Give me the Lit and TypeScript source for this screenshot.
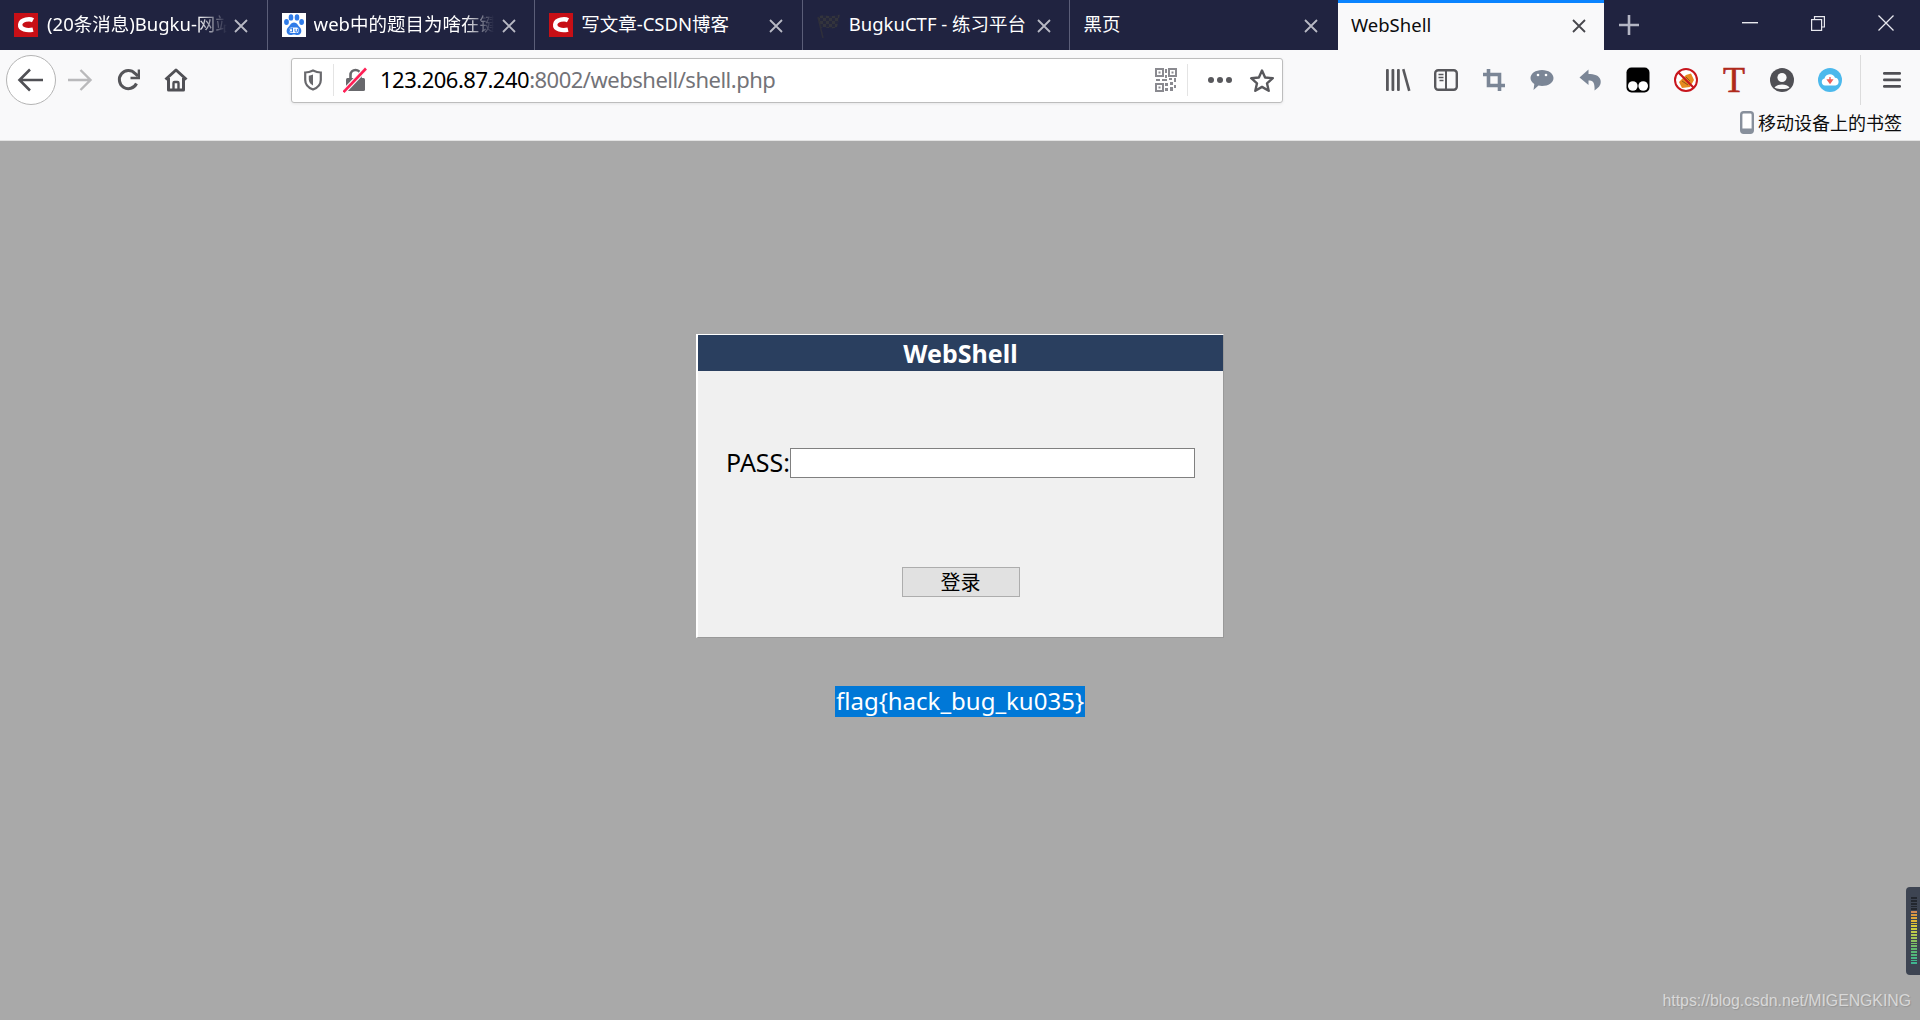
import { LitElement, html, css } from 'lit';
import { customElement } from 'lit/decorators.js';

const csdnIcon = html`<svg width="24" height="24" viewBox="0 0 24 24">
  <rect width="24" height="24" fill="#c70f16"></rect>
  <path d="M19 7.2 C16 5.6 7 6 6.2 11.5 C5.6 16.5 13 18 19 16.6" fill="none" stroke="#fff" stroke-width="4.4"></path>
</svg>`;

const baiduIcon = html`<svg width="24" height="24" viewBox="0 0 24 24">
  <rect width="24" height="24" fill="#fff"></rect>
  <g fill="#2f7be8">
    <ellipse cx="4.5" cy="9" rx="2.4" ry="3"></ellipse>
    <ellipse cx="9" cy="4.4" rx="2.3" ry="3.2"></ellipse>
    <ellipse cx="15" cy="4.4" rx="2.3" ry="3.2"></ellipse>
    <ellipse cx="19.6" cy="9" rx="2.4" ry="3"></ellipse>
    <path d="M12 9.5c3 0 4 3 6 5 2.4 2.6 1.6 7.5-2.5 7.5-1.5 0-2.3-.6-3.5-.6s-2 .6-3.5.6C4.4 22 3.6 17 6 14.5c2-2 3-5 6-5z"></path>
  </g>
  <rect x="7.5" y="14.5" width="9" height="5.5" rx="1.5" fill="#fff"></rect>
  <path d="M10.5 14.8v4.4M10.5 17.2a1.5 1.7 0 1 0 0 .1M13 15.8v2.2a1.2 1.2 0 0 0 2.4 0v-2.2" fill="none" stroke="#2f7be8" stroke-width="1"></path>
</svg>`;

const flagIcon = html`<svg width="24" height="26" viewBox="0 0 24 26">
  <defs>
    <pattern id="chk" width="6" height="6" patternUnits="userSpaceOnUse">
      <rect width="6" height="6" fill="#25273c"></rect>
      <rect width="3" height="3" fill="#33343c"></rect>
      <rect x="3" y="3" width="3" height="3" fill="#33343c"></rect>
    </pattern>
  </defs>
  <path d="M1 5 C7 1 12 7 23 2 L20 15 C12 19 8 13 4 16 Z" fill="url(#chk)"></path>
  <path d="M1 5 L6 26" stroke="#2e2f3a" stroke-width="1.5"></path>
</svg>`;

const closeIcon = html`<svg width="16" height="16" viewBox="0 0 16 16">
  <path d="M2 2 L14 14 M14 2 L2 14" stroke="currentColor" stroke-width="1.8" fill="none"></path>
</svg>`;

const backIcon = html`<svg width="28" height="28" viewBox="0 0 28 28" fill="none" stroke="#505055" stroke-width="2.6">
  <path d="M26 14 H3 M13 3.5 L2.5 14 L13 24.5"></path>
</svg>`;

const forwardIcon = html`<svg width="26" height="26" viewBox="0 0 26 26" fill="none" stroke="#b9b9bb" stroke-width="2.4">
  <path d="M1 13 H23 M13.5 3 L23.5 13 L13.5 23"></path>
</svg>`;

const reloadIcon = html`<svg width="24" height="24" viewBox="-1 0 24 24" fill="none" stroke="#555559" stroke-width="3">
  <path d="M19.5 15.5 A9 9 0 1 1 18 5.5 L21 8"></path>
  <path d="M22 1.5 V10 H13.5" stroke-width="2.6"></path>
</svg>`;

const homeIcon = html`<svg width="24" height="24" viewBox="0 0 24 24" fill="none" stroke="#505055" stroke-width="3" stroke-linejoin="round">
  <path d="M1.5 11.5 L12 2 L22.5 11.5"></path>
  <path d="M4.5 10 V22 H19.5 V10"></path>
  <path d="M9.5 22 V15 A1 1 0 0 1 10.5 14 H13.5 A1 1 0 0 1 14.5 15 V22" stroke-width="2.4"></path>
</svg>`;

const shieldIcon = html`<svg width="18" height="22" viewBox="0 0 18 22">
  <path d="M9 1.5 C12 3 14.5 3.5 16.8 3.5 V11 C16.8 15.5 13 19 9 20.5 C5 19 1.2 15.5 1.2 11 V3.5 C3.5 3.5 6 3 9 1.5 Z" fill="none" stroke="#68686c" stroke-width="2.2"></path>
  <path d="M9 5.5 V16.5 C6.5 15 4.8 13 4.8 10.5 V6.8 C6.2 6.7 7.6 6.2 9 5.5 Z" fill="#68686c"></path>
</svg>`;

const lockIcon = html`<svg width="24" height="26" viewBox="0 0 24 26">
  <path d="M7.5 12 V8 A5 5 0 0 1 17.5 8 V12" fill="none" stroke="#68686c" stroke-width="2.6"></path>
  <rect x="3" y="11" width="19" height="13" rx="1.5" fill="#68686c"></rect>
  <path d="M0.5 25 L23 1.5" stroke="#f9f9fa" stroke-width="5"></path>
  <path d="M0.5 25 L23 1.5" stroke="#ff1f55" stroke-width="2.6"></path>
</svg>`;

const qrIcon = html`<svg width="22" height="24" viewBox="0 0 22 24">
  <g fill="none" stroke="#8a8a90" stroke-width="2">
    <rect x="1" y="1" width="7" height="7"></rect>
    <rect x="14" y="1" width="7" height="7"></rect>
    <rect x="1" y="16" width="7" height="7"></rect>
  </g>
  <g fill="#8a8a90">
    <rect x="3.5" y="3.5" width="2" height="2"></rect>
    <rect x="16.5" y="3.5" width="2" height="2"></rect>
    <rect x="3.5" y="18.5" width="2" height="2"></rect>
    <rect x="10" y="1" width="2" height="4"></rect>
    <rect x="10" y="7" width="2" height="3"></rect>
    <rect x="1" y="11" width="4" height="2"></rect>
    <rect x="7" y="11" width="5" height="2"></rect>
    <rect x="14" y="10" width="3" height="2"></rect>
    <rect x="19" y="10" width="2" height="4"></rect>
    <rect x="10" y="15" width="3" height="3"></rect>
    <rect x="15" y="14" width="3" height="3"></rect>
    <rect x="19" y="17" width="2" height="3"></rect>
    <rect x="10" y="20" width="3" height="3"></rect>
    <rect x="15" y="19" width="3" height="4"></rect>
  </g>
</svg>`;

const dotsIcon = html`<svg width="26" height="8" viewBox="0 0 26 8" fill="#58585c">
  <circle cx="4" cy="4" r="3"></circle>
  <circle cx="13" cy="4" r="3"></circle>
  <circle cx="22" cy="4" r="3"></circle>
</svg>`;

const starIcon = html`<svg width="26" height="25" viewBox="0 0 26 25">
  <path d="M13 2.5 L16.1 9.5 L23.8 10.2 L18 15.3 L19.7 22.8 L13 18.9 L6.3 22.8 L8 15.3 L2.2 10.2 L9.9 9.5 Z" fill="none" stroke="#58585c" stroke-width="2.4" stroke-linejoin="round"></path>
</svg>`;

const libraryIcon = html`<svg width="26" height="24" viewBox="0 0 26 24" fill="#58585c">
  <rect x="1" y="1" width="2.8" height="22" rx="1"></rect>
  <rect x="6.5" y="1" width="2.8" height="22" rx="1"></rect>
  <rect x="12" y="1" width="2.8" height="22" rx="1"></rect>
  <path d="M17 1.5 L19.5 .8 L25.5 22.5 L23 23.2 Z"></path>
</svg>`;

const sidebarIcon = html`<svg width="24" height="22" viewBox="0 0 24 22">
  <rect x="1.2" y="1.2" width="21.6" height="19.6" rx="3" fill="none" stroke="#58585c" stroke-width="2.4"></rect>
  <path d="M12 1 V21" stroke="#58585c" stroke-width="2"></path>
  <path d="M4.5 5.5 H9.5 M4.5 8.5 H9.5 M5.5 11.5 H9.5" stroke="#58585c" stroke-width="1.5"></path>
</svg>`;

const cropIcon = html`<svg width="22" height="22" viewBox="0 0 22 22" fill="none" stroke="#7b8696" stroke-width="3.6">
  <path d="M5.5 0 V16.5 H22"></path>
  <path d="M0 5.5 H16.5 V22"></path>
</svg>`;

const chatIcon = html`<svg width="24" height="22" viewBox="0 0 24 22">
  <path d="M12 1 C18.5 1 23.5 4.6 23.5 9 C23.5 13.5 18.5 17 12 17 C10.8 17 9.5 16.9 8.5 16.6 L3.5 21 L4.3 15 C2 13.5 .5 11.4 .5 9 C.5 4.6 5.5 1 12 1 Z" fill="#7b8696"></path>
  <circle cx="8" cy="6" r="1.3" fill="#fff"></circle>
  <circle cx="16" cy="6" r="1.3" fill="#fff"></circle>
</svg>`;

const undoIcon = html`<svg width="22" height="22" viewBox="0 0 22 22">
  <path d="M9.5 0.5 L0.5 8.5 L9.5 16 V11.5 C14 11.5 16 13.5 15.5 21.5 C20 18.5 22.5 16 21.5 11 C20.5 6.5 15 5 9.5 5 Z" fill="#7b8696"></path>
</svg>`;

const tamperIcon = html`<svg width="24" height="26" viewBox="0 0 24 26">
  <rect x="0.5" y="0.5" width="23" height="25" rx="5" fill="#000"></rect>
  <circle cx="6.8" cy="19" r="4.8" fill="#fff"></circle>
  <circle cx="17.2" cy="19" r="4.8" fill="#fff"></circle>
</svg>`;

const noAdIcon = html`<svg width="24" height="24" viewBox="0 0 24 24">
  <circle cx="12" cy="12" r="11" fill="#fff" stroke="#c8161d" stroke-width="2"></circle>
  <path d="M5 14 L12 7 L17 5.5 L20 12 L16 19 L8 20 Z" fill="#e78a1f"></path>
  <path d="M8 13 L14 17 M12 9 L16 13" stroke="#8c5a1c" stroke-width="1"></path>
  <path d="M4.5 4.5 L19.5 19.5" stroke="#c8161d" stroke-width="2.2"></path>
</svg>`;

const accountIcon = html`<svg width="24" height="24" viewBox="0 0 24 24">
  <circle cx="12" cy="12" r="12" fill="#505055"></circle>
  <circle cx="12" cy="9.5" r="4.6" fill="#f9f9fa"></circle>
  <path d="M4.5 19.5 C7 15.5 17 15.5 19.5 19.5 C17 21.5 7 21.5 4.5 19.5 Z" fill="#f9f9fa"></path>
</svg>`;

const cloudIcon = html`<svg width="24" height="24" viewBox="0 0 24 24">
  <circle cx="12" cy="12" r="12" fill="#4cb9ec"></circle>
  <path d="M7 17.5 A3.5 3.5 0 0 1 6.5 10.6 A5.5 5.5 0 0 1 17 9.8 A3.9 3.9 0 0 1 17.5 17.5 Z" fill="#fff"></path>
  <path d="M12 9 V13 M9.8 12 L12 15 L14.2 12 Z" stroke="#f0605a" stroke-width="1.4" fill="#f0605a"></path>
</svg>`;

const menuIcon = html`<svg width="20" height="18" viewBox="0 0 20 18" fill="#505055">
  <rect x="1" y="1" width="18" height="2.8" rx="1.2"></rect>
  <rect x="1" y="7.5" width="18" height="2.8" rx="1.2"></rect>
  <rect x="1" y="14" width="18" height="2.8" rx="1.2"></rect>
</svg>`;

const phoneIcon = html`<svg width="14" height="23" viewBox="0 0 14 23">
  <rect x="1.2" y="1.2" width="11.6" height="20.6" rx="2.5" fill="#fff" stroke="#88909c" stroke-width="2.4"></rect>
  <rect x="1.2" y="17.5" width="11.6" height="4.3" rx="1" fill="#88909c"></rect>
</svg>`;

const tabs = [
  { icon: csdnIcon, title: '(20条消息)Bugku-网站' },
  { icon: baiduIcon, title: 'web中的题目为啥在键' },
  { icon: csdnIcon, title: '写文章-CSDN博客' },
  { icon: flagIcon, title: 'BugkuCTF - 练习平台' },
  { icon: null, title: '黑页' },
];

const toolbarIcons = [
  libraryIcon, sidebarIcon, cropIcon, chatIcon, undoIcon, tamperIcon, noAdIcon,
];

// level meter colours, top to bottom
const meterTicks = [
  '#23272f', '#23272f', '#23272f', '#23272f', '#23272f',
  '#d38a52', '#dc9a3f', '#dfa83a', '#e0b535', '#dfc033', '#d8c838', '#cbcb42', '#bfcb48',
  '#b0c950', '#a3c657', '#8cc25f', '#7fc065', '#76bd68', '#62b96f', '#58b775', '#52b67a', '#48b585', '#42b58b', '#3fb490',
];

@customElement('app-root')
export class AppRoot extends LitElement {
  static styles = css`
    :host {
      display: flex;
      flex-direction: column;
      position: relative;
      height: 100vh;
      overflow: hidden;
      font-family: "Noto Sans", "Noto Sans CJK SC", sans-serif;
      background: #a9a9a9;
    }

    .tabstrip {
      display: flex;
      flex: 0 0 50px;
      background: #202340;
      color: #fff;
    }

    .tab {
      flex: 0 0 267.6px;
      box-sizing: border-box;
      display: flex;
      align-items: center;
      padding-left: 14px;
      border-right: 1px solid #5b5e78;
      position: relative;
    }

    .tab.last {
      border-right: none;
    }

    .tab.active {
      flex: 0 0 266px;
      background: #f9f9fa;
      color: #0c0c0d;
      border-top: 3px solid #0a84ff;
      border-right: none;
    }

    .favicon {
      flex: 0 0 24px;
      height: 26px;
      margin-right: 8px;
      display: flex;
      align-items: center;
    }

    .title {
      width: 200px;
      flex: 0 0 auto;
      overflow: hidden;
      white-space: nowrap;
      font-size: 18.5px;
      line-height: 24px;
      margin-top: -2px;
      mask-image: linear-gradient(to right, #000 150px, transparent 180px);
      -webkit-mask-image: linear-gradient(to right, #000 150px, transparent 180px);
    }

    .tab:first-child .title {
      margin-left: 1px;
    }

    .tab.plain .title,
    .tab.active .title {
      width: 211px;
      mask-image: none;
      -webkit-mask-image: none;
    }

    .tab.plain .title {
      margin-left: -1px;
    }

    .tab.active .title {
      margin-top: -4px;
      margin-left: -1px;
    }

    .title.full {
      mask-image: none;
      -webkit-mask-image: none;
    }

    .close {
      position: absolute;
      left: 233px;
      top: 18px;
      display: flex;
      color: #b8b9c4;
    }

    .tab.active .close {
      color: #47474c;
      top: 15px;
    }

    .new-tab {
      flex: 0 0 50px;
      display: flex;
      align-items: center;
      justify-content: center;
    }

    .window-controls {
      margin-left: auto;
      display: flex;
      height: 46px;
      align-items: center;
    }

    .win {
      width: 68px;
      display: flex;
      justify-content: center;
    }

    .toolbar {
      flex: 0 0 90px;
      background: #f9f9fa;
      border-bottom: 1px solid #e3e3e3;
      display: flex;
      flex-direction: column;
    }

    .nav {
      display: flex;
      align-items: center;
      height: 60px;
      padding-left: 6px;
    }

    .back {
      width: 50px;
      height: 50px;
      box-sizing: border-box;
      border: 1px solid #b4b4b4;
      border-radius: 50%;
      background: #fff;
      display: flex;
      align-items: center;
      justify-content: center;
    }

    .btn {
      flex: 0 0 48px;
      height: 48px;
      display: flex;
      align-items: center;
      justify-content: center;
    }

    .urlbar {
      margin-left: 91px;
      width: 992px;
      height: 45px;
      box-sizing: border-box;
      display: flex;
      align-items: center;
      background: #fff;
      border: 1px solid #bdbdbd;
      border-radius: 3px;
      box-shadow: 0 1px 3px rgba(0, 0, 0, 0.08);
    }

    .shield {
      flex: 0 0 42px;
      height: 32px;
      box-sizing: border-box;
      border-right: 1px solid #e4e4e4;
      display: flex;
      align-items: center;
      justify-content: center;
    }

    .lock {
      flex: 0 0 42px;
      display: flex;
      justify-content: center;
    }

    .address {
      flex: 1;
      padding: 0 0 2px 4px;
      font-size: 22px;
      letter-spacing: -0.5px;
      color: #737378;
      white-space: nowrap;
    }

    .address b {
      font-weight: 400;
      color: #000;
    }

    .url-end {
      display: flex;
      align-items: center;
      height: 32px;
    }

    .qr {
      display: flex;
      padding-right: 10px;
      border-right: 1px solid #e4e4e4;
      height: 32px;
      align-items: center;
    }

    .dots {
      display: flex;
      width: 58px;
      padding-left: 3px;
      justify-content: center;
    }

    .star {
      display: flex;
      width: 26px;
      margin-right: 7px;
    }

    .actions {
      display: flex;
      align-items: center;
      margin-left: 91px;
    }

    .t-icon {
      flex: 0 0 48px;
      text-align: center;
      font-family: "Liberation Serif", serif;
      font-size: 36px;
      line-height: 34px;
      color: #b02a1c;
      -webkit-text-stroke: 0.6px #b02a1c;
    }

    .menu-wrap {
      margin-left: 6px;
      padding-left: 21px;
      height: 50px;
      border-left: 1px solid #dcdcdc;
      display: flex;
      align-items: center;
    }

    .bookmarks {
      display: flex;
      justify-content: flex-end;
      align-items: center;
      gap: 4px;
      padding-right: 18px;
      font-size: 18px;
      line-height: 24px;
      color: #0c0c0d;
      font-family: "Noto Sans CJK SC", sans-serif;
    }

    .page {
      flex: 1;
      display: flex;
      flex-direction: column;
      align-items: center;
      padding-top: 193px;
      background: #a9a9a9;
    }

    .card {
      width: 528px;
      box-sizing: border-box;
      background: #f0f0f0;
      border-style: solid;
      border-width: 1px 1px 1px 2px;
      border-color: #fff #999 #999 #fff;
      padding-bottom: 40px;
    }

    .card-head {
      height: 36px;
      line-height: 36px;
      text-align: center;
      background: #2a3f5f;
      color: #fff;
      font-size: 25px;
      font-weight: 700;
    }

    .pass-row {
      display: flex;
      align-items: center;
      margin-top: 77px;
      padding-left: 28px;
      font-size: 25px;
      line-height: 30px;
      color: #000;
    }

    .pass-row span {
      margin-top: -2px;
    }

    .pass-row input {
      width: 405px;
      height: 30px;
      box-sizing: border-box;
      margin: 0;
      padding: 0;
      border: 1px solid #808080;
      background: #fff;
      outline: none;
    }

    .submit-row {
      display: flex;
      justify-content: center;
      margin-top: 89px;
    }

    .submit-row button {
      width: 118px;
      height: 30px;
      box-sizing: border-box;
      padding: 0;
      border: 1px solid #adadad;
      background: #e1e1e1;
      color: #000;
      font-family: "Noto Sans CJK SC", sans-serif;
      font-size: 20px;
      line-height: 28px;
    }

    .flag {
      margin-top: 48px;
      padding: 0 1px;
      font-size: 24px;
      line-height: 30px;
      height: 31px;
      color: #fff;
      background: #0078d7;
      white-space: nowrap;
    }

    .watermark {
      position: absolute;
      right: 9px;
      bottom: 9px;
      font-family: "Liberation Sans", Arial, sans-serif;
      font-size: 15.8px;
      line-height: 20px;
      color: #d8d8d8;
      text-shadow: 1px 1px 1px rgba(0, 0, 0, 0.12);
    }

    .meter {
      position: absolute;
      right: 0;
      top: 887px;
      width: 14px;
      height: 88px;
      box-sizing: border-box;
      background: #3d4452;
      border-radius: 4px 0 0 4px;
      padding: 10px 3px 0 5px;
      display: flex;
      flex-direction: column;
      gap: 1px;
    }

    .tick {
      flex: 0 0 1.85px;
    }
  `;

  render() {
    return html`
      <div class="tabstrip">
        ${tabs.map((t, i) => html`
          <div class="tab ${t.icon ? '' : 'plain'} ${i === tabs.length - 1 ? 'last' : ''}">
            ${t.icon ? html`<span class="favicon">${t.icon}</span>` : ''}
            <span class="title ${i >= 2 ? 'full' : ''}">${t.title}</span>
            <span class="close">${closeIcon}</span>
          </div>
        `)}
        <div class="tab active">
          <span class="title">WebShell</span>
          <span class="close">${closeIcon}</span>
        </div>
        <div class="new-tab">
          <svg width="22" height="22" viewBox="0 0 22 22" fill="none" stroke="#b4b6c4" stroke-width="2.6"><path d="M11 1 V21 M1 11 H21"></path></svg>
        </div>
        <div class="window-controls">
          <span class="win"><svg width="16" height="2" viewBox="0 0 16 2"><rect width="16" height="1.4" fill="#e8e8ee"></rect></svg></span>
          <span class="win"><svg width="14" height="15" viewBox="0 0 14 15" fill="none" stroke="#e8e8ee" stroke-width="1.2"><rect x=".6" y="3.6" width="10" height="10.8"></rect><path d="M3.5 3.5 V.6 H13.4 V11 H10.7"></path></svg></span>
          <span class="win"><svg width="16" height="16" viewBox="0 0 16 16" fill="none" stroke="#e8e8ee" stroke-width="1.3"><path d="M.5 .5 L15.5 15.5 M15.5 .5 L.5 15.5"></path></svg></span>
        </div>
      </div>

      <div class="toolbar">
        <div class="nav">
          <div class="back">${backIcon}</div>
          <div class="btn">${forwardIcon}</div>
          <div class="btn">${reloadIcon}</div>
          <div class="btn">${homeIcon}</div>
          <div class="urlbar">
            <div class="shield">${shieldIcon}</div>
            <div class="lock">${lockIcon}</div>
            <div class="address"><b>123.206.87.240</b>:8002/webshell/shell.php</div>
            <div class="url-end">
              <div class="qr">${qrIcon}</div>
              <div class="dots">${dotsIcon}</div>
              <div class="star">${starIcon}</div>
            </div>
          </div>
          <div class="actions">
            ${toolbarIcons.map((icon) => html`<div class="btn">${icon}</div>`)}
            <div class="t-icon">T</div>
            <div class="btn">${accountIcon}</div>
            <div class="btn">${cloudIcon}</div>
            <div class="menu-wrap">${menuIcon}</div>
          </div>
        </div>
        <div class="bookmarks">${phoneIcon}<span>移动设备上的书签</span></div>
      </div>

      <div class="page">
        <div class="card">
          <div class="card-head">WebShell</div>
          <div class="pass-row"><span>PASS:</span><input type="password" /></div>
          <div class="submit-row"><button>登录</button></div>
        </div>
        <div class="flag">flag{hack_bug_ku035}</div>
      </div>

      <div class="meter">
        ${meterTicks.map((c) => html`<div class="tick" style="background:${c}"></div>`)}
      </div>
      <div class="watermark">https://blog.csdn.net/MIGENGKING</div>
    `;
  }
}
